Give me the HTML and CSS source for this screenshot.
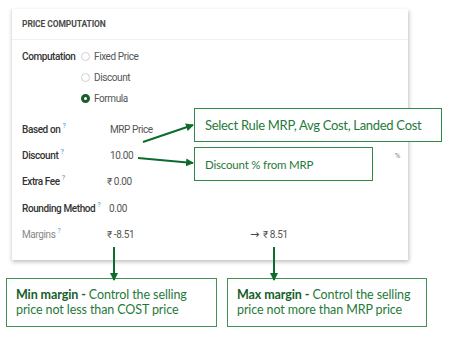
FILE: index.html
```html
<!DOCTYPE html>
<html>
	<head>
		<meta charset="utf-8">
		<title>Price Computation</title>
		<link rel="stylesheet" href="styles.css">
	</head>
	<body>
		<div class="page">

			<div class="card">
				<div class="card-head">PRICE COMPUTATION</div>

				<div class="comp">
					<div class="comp-label">Computation</div>
					<div class="radios">
						<div class="radio"><span class="dot"></span>Fixed Price</div>
						<div class="radio"><span class="dot"></span>Discount</div>
						<div class="radio"><span class="dot on"></span>Formula</div>
					</div>
				</div>

				<div class="fields">
					<div class="field">
						<div class="label">Based on<sup>?</sup></div>
						<div class="value pad">MRP Price</div>
					</div>
					<div class="field">
						<div class="label">Discount<sup>?</sup></div>
						<div class="value pad">10.00</div>
						<div class="unit">%</div>
					</div>
					<div class="field">
						<div class="label">Extra Fee<sup>?</sup></div>
						<div class="value">₹ 0.00</div>
					</div>
					<div class="field">
						<div class="label">Rounding Method<sup>?</sup></div>
						<div class="value pad-s">0.00</div>
					</div>
					<div class="field muted">
						<div class="label">Margins<sup>?</sup></div>
						<div class="value min">₹ -8.51</div>
						<div class="value"><span class="to">→</span> ₹ 8.51</div>
					</div>
				</div>
			</div>

			<div class="notes">
				<div class="note note-min">
					<div><b>Min margin -</b> Control the selling</div>
					<div>price not less than COST price</div>
				</div>
				<div class="note note-max">
					<div><b>Max margin -</b> Control the selling</div>
					<div>price not more than MRP price</div>
				</div>
			</div>

			<!-- callouts over the form -->
			<div class="callout callout-rule">Select Rule MRP, Avg Cost, Landed Cost</div>
			<div class="callout callout-disc">Discount % from MRP</div>

			<svg class="arrows" width="449" height="345" viewBox="0 0 449 345">
				<defs>
					<marker id="head" markerWidth="8" markerHeight="8" refX="7" refY="4" orient="auto" markerUnits="userSpaceOnUse">
						<path d="M0,0 L8,4 L0,8 Z" fill="#0e6b2e"/>
					</marker>
				</defs>
				<line x1="143" y1="142" x2="193" y2="125" stroke="#0e6b2e" stroke-width="2" marker-end="url(#head)"/>
				<line x1="138" y1="158" x2="193" y2="163" stroke="#0e6b2e" stroke-width="2" marker-end="url(#head)"/>
				<line x1="114" y1="247" x2="114" y2="280" stroke="#0e6b2e" stroke-width="2" marker-end="url(#head)"/>
				<line x1="274" y1="247" x2="274" y2="280" stroke="#0e6b2e" stroke-width="2" marker-end="url(#head)"/>
			</svg>

		</div>
	</body>
</html>
```

FILE: styles.css
```css
body{
	margin:0;
	background:#fff;
	font-family:Roboto, "Liberation Sans", sans-serif;
}

.page{
	position:relative;
	width:449px;
	height:345px;
	padding:9px 0 0 11px;
	box-sizing:border-box;
}

/* form card */
.card{
	width:397px;
	height:251px;
	background:#fff;
	box-shadow:1px 2px 4px rgba(0,0,0,0.25);
	border-left:1px solid #e6e6e6;
	box-sizing:border-box;
}

.card-head{
	height:30px;
	line-height:31px;
	padding-left:10px;
	font-size:8.5px;
	font-weight:bold;
	color:#4a4a4a;
	letter-spacing:-0.1px;
	border-bottom:1px solid #f0f0f0;
}

.comp{
	display:flex;
	padding:6px 0 0 10px;
}

.comp-label{
	width:59px;
	height:21px;
	line-height:21px;
	font-size:10px;
	font-weight:500;
	color:#333;
	letter-spacing:-0.4px;
}

.radio{
	display:flex;
	align-items:center;
	height:21px;
	font-size:10px;
	color:#555;
	letter-spacing:-0.4px;
}

.dot{
	width:9px;
	height:9px;
	border:1px solid #d0d0d0;
	border-radius:50%;
	margin-right:4px;
	box-sizing:border-box;
}

.dot.on{
	border:3px solid #175e2b;
}

.fields{
	padding:7px 8px 0 10px;
}

.field{
	display:flex;
	align-items:center;
	height:26.3px;
	font-size:10px;
	letter-spacing:-0.4px;
}

.label{
	width:85px;
	font-weight:500;
	color:#333;
}

.label sup{
	font-size:7px;
	color:#6aa7cf;
	margin-left:2px;
	vertical-align:5px;
	line-height:0;
}

.value{
	color:#555;
}

.pad{
	padding-left:3px;
}

.pad-s{
	padding-left:2px;
}

.unit{
	margin-left:auto;
	font-size:8px;
	color:#888;
}

.muted .label{
	font-weight:normal;
	color:#888;
}

.min{
	width:143px;
}

.to{
	font-family:"DejaVu Sans", sans-serif;
	font-size:11px;
	color:#444;
	margin-right:2px;
}

/* bottom notes */
.notes{
	display:flex;
	margin:18px 0 0 -5px;
	gap:10px;
}

.note{
	height:49px;
	box-sizing:border-box;
	border:1px solid #3f9353;
	padding:8px 0 0 9px;
	font-family:Lato, "Open Sans", sans-serif;
	font-size:12.5px;
	line-height:15px;
	color:#1f7a3a;
	letter-spacing:-0.1px;
	white-space:nowrap;
}

.note b{
	color:#155f2a;
}

.note-min{
	width:211px;
}

.note-max{
	width:200px;
}

/* callouts */
.callout{
	position:absolute;
	left:194px;
	height:34px;
	box-sizing:border-box;
	background:#fff;
	border:1px solid #2f8a45;
	font-family:Lato, "Open Sans", sans-serif;
	color:#1f7a3a;
	padding-left:10px;
	display:flex;
	align-items:center;
	white-space:nowrap;
}

.callout-rule{
	top:108px;
	width:248px;
	font-size:13px;
	letter-spacing:-0.3px;
}

.callout-disc{
	top:147px;
	width:179px;
	font-size:11.5px;
	letter-spacing:-0.2px;
}

.arrows{
	position:absolute;
	left:0;
	top:0;
	pointer-events:none;
}
```
